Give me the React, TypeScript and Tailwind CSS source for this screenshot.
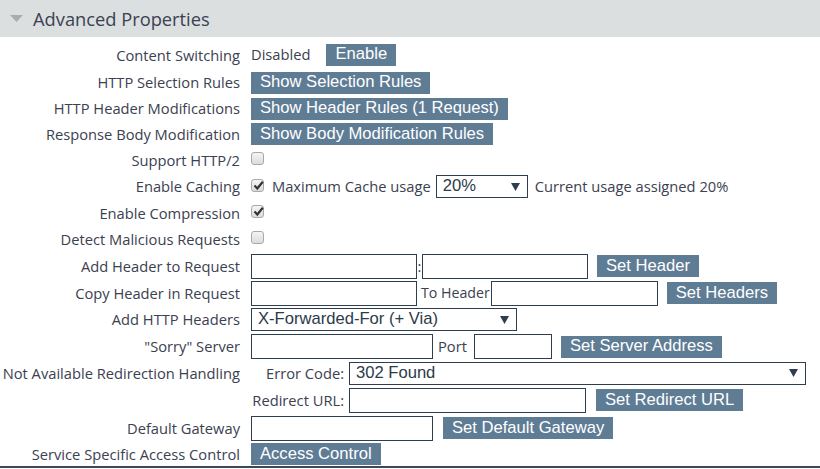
import React from 'react';

const labelFont = { fontFamily: '"Open Sans", "Noto Sans", sans-serif' };

function Btn({ children, className = '' }: { children: React.ReactNode; className?: string }) {
  return (
    <span
      className={`inline-flex h-[22px] items-center bg-[#5f7c95] px-[9px] text-[16.6px] leading-none text-white ${className}`}
      style={{ fontFamily: '"Liberation Sans", Arial, sans-serif' }}
    >
      {children}
    </span>
  );
}

function Input({ w, className = '' }: { w: string; className?: string }) {
  return <span className={`block h-[25px] shrink-0 border border-[#2f3e4f] bg-white ${w} ${className}`} />;
}

function Select({ value, w, className = '' }: { value: string; w: string; className?: string }) {
  return (
    <span
      className={`flex h-[23px] shrink-0 items-center justify-between border border-[#2f3e4f] bg-white pl-[6px] pr-[7px] text-[16.6px] text-[#2c3a4a] ${w} ${className}`}
      style={{ fontFamily: '"Liberation Sans", Arial, sans-serif' }}
    >
      <span>{value}</span>
      <svg width="9" height="8" viewBox="0 0 9 8">
        <path d="M0 0h9L4.5 8z" fill="#2f3e4f" />
      </svg>
    </span>
  );
}

function Check({ checked }: { checked?: boolean }) {
  return (
    <span className="relative block h-[13px] w-[13px] rounded-[3px] border border-[#a9a9a9] bg-gradient-to-b from-[#f4f4f4] to-[#dcdcdc]">
      {checked && (
        <svg className="absolute left-[1px] top-[0px]" width="11" height="11" viewBox="0 0 11 11">
          <path d="M1.5 5.5l2.8 3L9.8 1.8" fill="none" stroke="#333" strokeWidth="2.2" />
        </svg>
      )}
    </span>
  );
}

function Row({ label, h, children }: { label: string; h: string; children?: React.ReactNode }) {
  return (
    <div className={`flex items-center ${h}`}>
      <div className="w-[240px] shrink-0 whitespace-nowrap text-right text-[14.7px] text-[#3b4150]" style={labelFont}>
        {label}
      </div>
      <div className="flex items-center whitespace-nowrap pl-[11px] text-[14.7px] text-[#3b4150]" style={labelFont}>
        {children}
      </div>
    </div>
  );
}

export default function App() {
  return (
    <div className="h-[469px] w-[820px] overflow-hidden bg-white">
      <div className="flex h-[37px] items-center bg-[#dcdfe0]">
        <svg className="ml-[10px]" width="13" height="7" viewBox="0 0 13 7">
          <path d="M0 0h13L6.5 7z" fill="#a9adb0" />
        </svg>
        <span className="ml-[10px] text-[18.3px] text-[#3a4152]" style={labelFont}>
          Advanced Properties
        </span>
      </div>
      <div className="border-b-2 border-[#3a4859] pt-[5px]">
        <Row label="Content Switching" h="h-[27px]">
          <span className="-mt-[3px]">Disabled</span>
          <Btn className="-mt-[2px] ml-[16px]">Enable</Btn>
        </Row>
        <Row label="HTTP Selection Rules" h="h-[27px]">
          <Btn>Show Selection Rules</Btn>
        </Row>
        <Row label="HTTP Header Modifications" h="h-[25px]">
          <Btn>Show Header Rules (1 Request)</Btn>
        </Row>
        <Row label="Response Body Modification" h="h-[26px]">
          <Btn>Show Body Modification Rules</Btn>
        </Row>
        <Row label="Support HTTP/2" h="h-[26px]">
          <span className="-mt-[3px]">
            <Check />
          </span>
        </Row>
        <Row label="Enable Caching" h="h-[27px]">
          <span className="-mt-[3px]">
            <Check checked />
          </span>
          <span className="ml-[8px]">Maximum Cache usage</span>
          <Select value="20%" w="w-[92px]" className="ml-[5px]" />
          <span className="ml-[7px]">Current usage assigned 20%</span>
        </Row>
        <Row label="Enable Compression" h="h-[26px]">
          <span className="-mt-[3px]">
            <Check checked />
          </span>
        </Row>
        <Row label="Detect Malicious Requests" h="h-[26px]">
          <span className="-mt-[3px]">
            <Check />
          </span>
        </Row>
        <Row label="Add Header to Request" h="h-[28px]">
          <Input w="w-[166px]" />
          <span className="w-[5px] text-center">:</span>
          <Input w="w-[166px]" />
          <Btn className="ml-[9px]">Set Header</Btn>
        </Row>
        <Row label="Copy Header in Request" h="h-[26px]">
          <Input w="w-[166px]" />
          <span className="ml-[4px] mr-[1px] text-[14.2px]">To Header</span>
          <Input w="w-[167px]" />
          <Btn className="ml-[9px]">Set Headers</Btn>
        </Row>
        <Row label="Add HTTP Headers" h="h-[27px]">
          <Select value="X-Forwarded-For (+ Via)" w="w-[266px]" />
        </Row>
        <Row label={'"Sorry" Server'} h="h-[27px]">
          <Input w="w-[182px]" />
          <span className="ml-[5px] mr-[7px]">Port</span>
          <Input w="w-[78px]" />
          <Btn className="ml-[9px]">Set Server Address</Btn>
        </Row>
        <Row label="Not Available Redirection Handling" h="h-[26px]">
          <span className="w-[98px] pr-[5px] text-right">Error Code:</span>
          <Select value="302 Found" w="w-[457px]" />
        </Row>
        <Row label="" h="h-[28px]">
          <span className="w-[98px] pr-[5px] text-right">Redirect URL:</span>
          <Input w="w-[237px]" />
          <Btn className="ml-[10px]">Set Redirect URL</Btn>
        </Row>
        <Row label="Default Gateway" h="h-[28px]">
          <Input w="w-[182px]" />
          <Btn className="ml-[10px]">Set Default Gateway</Btn>
        </Row>
        <Row label="Service Specific Access Control" h="h-[24px]">
          <Btn>Access Control</Btn>
        </Row>
      </div>
    </div>
  );
}
